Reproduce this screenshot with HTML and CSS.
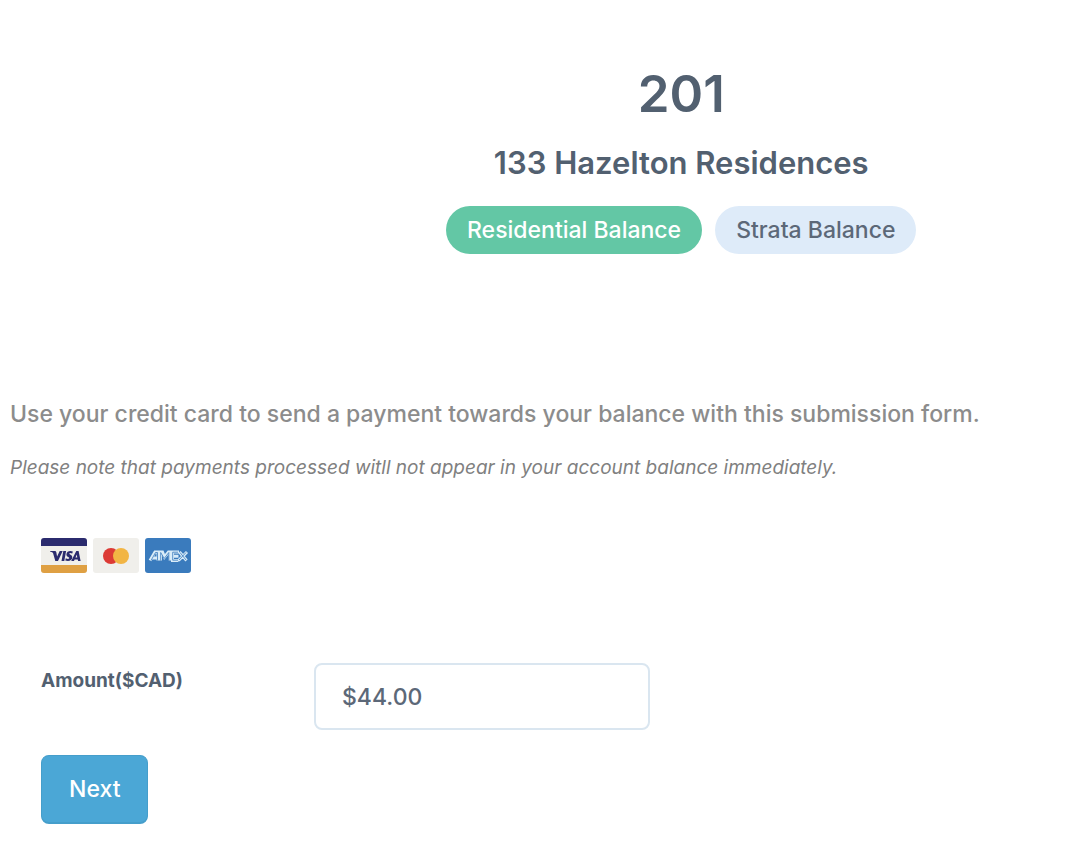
FILE: index.html
```html
<!DOCTYPE html>
<html lang="en">
<head>
    <meta charset="UTF-8">
    <meta name="viewport" content="width=device-width, initial-scale=1">
    <title>133 Hazelton Residences</title>
    <link rel="stylesheet" href="styles.css">
</head>
<body>
    <header class="unit-header">
        <h1>201</h1>
        <h2>133 Hazelton Residences</h2>
        <div class="balance-tabs">
            <button type="button" class="pill active">Residential Balance</button>
            <button type="button" class="pill">Strata Balance</button>
        </div>
    </header>

    <main>
        <p class="intro">Use your credit card to send a payment towards your balance with this submission form.</p>
        <p class="note">Please note that payments processed witll not appear in your account balance immediately.</p>

        <form class="payment-form">
            <div class="cards">
                <svg class="card" viewBox="0 0 46 35" role="img" aria-label="Visa">
                    <rect width="46" height="35" rx="3" fill="#f0efeb"/>
                    <path d="M0 8V3a3 3 0 0 1 3-3h40a3 3 0 0 1 3 3v5z" fill="#2b2b6e"/>
                    <path d="M0 27h46v5a3 3 0 0 1-3 3H3a3 3 0 0 1-3-3z" fill="#dfa043"/>
                    <path d="M9 13h5q1 0 1.300 1.200l.8 4.300 2.600-5.500h3l-4.700 10h-2.700l-2.200-7.800q-.2-.7-1-1L9 13.600z" fill="#2b2b6e"/>
                    <path d="M22.300 13h2.800l-1.800 10h-2.800z" fill="#2b2b6e"/>
                    <path d="M31.800 13.500l-.5 2.100c-1.600-.8-3-.7-3 .1 0 .9 3 1.100 3 3.600 0 3.700-4.200 4.300-7 3.200l.5-2.200c1.600.8 3.500.8 3.500-.2 0-1.100-2.900-1.200-2.900-3.600 0-3.500 4-4.100 6.400-3z" fill="#2b2b6e"/>
                    <path d="M35.300 13h2.300l2 10h-2.500l-.3-1.500h-3.200l-.6 1.500h-2.800zm.4 3.400l-1.200 3.100h1.800z" fill="#2b2b6e"/>
                </svg>
                <svg class="card" viewBox="0 0 46 35" role="img" aria-label="Mastercard">
                    <rect width="46" height="35" rx="3" fill="#f0efeb"/>
                    <circle cx="18" cy="18" r="8" fill="#dc3a35"/>
                    <circle cx="28" cy="18" r="8" fill="#f2b544"/>
                </svg>
                <svg class="card" viewBox="0 0 46 35" role="img" aria-label="American Express">
                    <rect width="46" height="35" rx="3" fill="#3a7bbd"/>
                    <g fill="none" stroke-linejoin="miter">
                        <path d="M5 22.500L10 14h3v8.500M7 20h6M15.500 22.500v-8.500h2l2 5 4-5h1.500v8.500M34 14h-6.500v8.500h6M27.500 18.200h6M34.500 14l7 8.500M42 14l-8.500 8.500" stroke="#d9ecf8" stroke-width="3"/>
                        <path d="M6 22.500L10.500 14.500h2v8M15.700 22.500v-8l3.500 6 4.600-6v8M33 14.200h-5.300v8h5.300M35 14.500l6 7.500M41 14.500l-7 7.500" stroke="#3a7bbd" stroke-width=".8"/>
                    </g>
                </svg>
            </div>

            <div class="form-row">
                <label for="amount">Amount($CAD)</label>
                <input type="text" id="amount" name="amount" value="$44.00">
            </div>

            <button type="submit" class="next-button">Next</button>
        </form>
    </main>
</body>
</html>
```
FILE: styles.css
```css
* {
    box-sizing: border-box;
}

body {
    margin: 0;
    padding: 64px 0 20px;
    font-family: Inter, "Liberation Sans", sans-serif;
    font-size: 23px;
    line-height: 32px;
    font-weight: 500;
    color: #526070;
    background-color: #fff;
}

h1, h2, p {
    margin: 0;
}

button, input {
    font: inherit;
}

.unit-header {
    margin-left: 25%;
    text-align: center;
}

h1 {
    font-size: 51px;
    line-height: 60px;
    font-weight: 600;
}

h2 {
    margin-top: 19px;
    font-size: 31px;
    line-height: 40px;
    font-weight: 600;
}

.balance-tabs {
    display: flex;
    flex-wrap: wrap;
    justify-content: center;
    gap: 13px;
    margin-top: 23px;
}

.pill {
    padding: 8px 21px;
    border: none;
    border-radius: 24px;
    color: #5c6878;
    background-color: #deebf9;
    cursor: pointer;
}

.pill.active {
    color: #fff;
    background-color: #63c7a5;
}

main {
    margin-top: 144px;
    padding: 0 10px;
    color: #8c8c8c;
}

.note {
    margin-top: 22px;
    font-size: 19px;
    font-style: italic;
    font-weight: 400;
    color: #808080;
}

.payment-form {
    margin-top: 54px;
    padding-left: 31px;
}

.cards {
    display: flex;
    gap: 6px;
}

.card {
    width: 46px;
    height: 35px;
}

.form-row {
    display: grid;
    grid-template-columns: 273px 336px;
    margin-top: 90px;
    color: #526070;
}

label {
    font-size: 19px;
    line-height: 36px;
    font-weight: bold;
}

input {
    width: 100%;
    height: 67px;
    padding: 0 26px;
    border: 2px solid #dae6f0;
    border-radius: 8px;
    color: #5c6878;
}

.next-button {
    margin-top: 25px;
    padding: 17px 27px;
    border: 1px solid #459ecb;
    border-bottom-width: 2px;
    border-radius: 8px;
    color: #fff;
    background-color: #4ba7d6;
    cursor: pointer;
}
```
